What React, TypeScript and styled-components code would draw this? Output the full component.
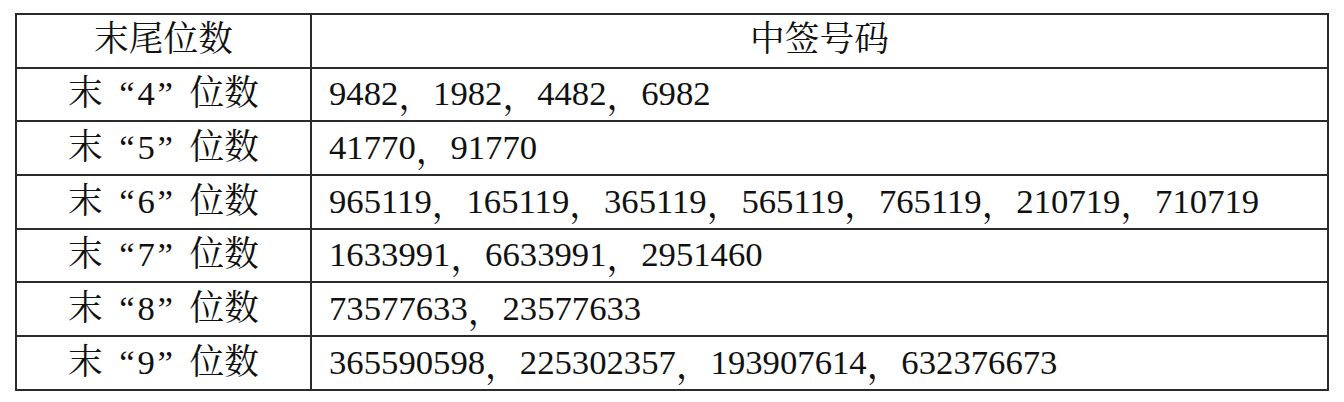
import React from "react";
import { createGlobalStyle, styled } from "styled-components";

const rows = [
  { digit: "4", codes: ["9482", "1982", "4482", "6982"] },
  { digit: "5", codes: ["41770", "91770"] },
  {
    digit: "6",
    codes: ["965119", "165119", "365119", "565119", "765119", "210719", "710719"],
  },
  { digit: "7", codes: ["1633991", "6633991", "2951460"] },
  { digit: "8", codes: ["73577633", "23577633"] },
  { digit: "9", codes: ["365590598", "225302357", "193907614", "632376673"] },
];

const GlobalStyle = createGlobalStyle`
  html, body {
    margin: 0;
    padding: 0;
    background: #ffffff;
  }
  body {
    color: #111111;
  }
`;

export default function App() {
  return (
    <>
      <GlobalStyle />
      <Page>
        <Table>
          <HeadCell>末尾位数</HeadCell>
          <HeadCell>中签号码</HeadCell>
          {rows.map((r) => (
            <React.Fragment key={r.digit}>
              <LabelCell>
                末<Quote $open>“</Quote>
                {r.digit}
                <Quote>”</Quote>位数
              </LabelCell>
              <CodeCell>
                {r.codes.map((c, i) => (
                  <React.Fragment key={c}>
                    {i > 0 && <Comma>，</Comma>}
                    <Num>{c}</Num>
                  </React.Fragment>
                ))}
              </CodeCell>
            </React.Fragment>
          ))}
        </Table>
      </Page>
    </>
  );
}

const Page = styled.div`
  padding: 13px 0 0 15px;
`;

const Table = styled.div`
  width: 1314px;
  box-sizing: border-box;
  display: grid;
  grid-template-columns: 293px 1fr;
  grid-auto-rows: 51.7px;
  gap: 2px;
  padding: 2px;
  background: #2b2b2b;
  font-family: "Liberation Serif", "Times New Roman", Tinos, "DejaVu Serif",
    "Noto Serif CJK SC", "Noto Sans CJK SC", serif;
  font-size: 34.7px;
`;

const Cell = styled.div`
  background: #ffffff;
  display: flex;
  align-items: center;
  white-space: nowrap;
  line-height: 1;
`;

const HeadCell = styled(Cell)`
  justify-content: center;
`;

const LabelCell = styled(Cell)`
  justify-content: center;
`;

const CodeCell = styled(Cell)`
  padding-left: 17px;
`;

const Num = styled.span`
  font-family: "Liberation Serif", "Times New Roman", serif;
`;

const Quote = styled.span<{ $open?: boolean }>`
  display: inline-block;
  width: 1em;
  text-align: ${(p) => (p.$open ? "right" : "left")};
  padding: ${(p) => (p.$open ? "0 0.08em 0 0" : "0 0 0 0.08em")};
  box-sizing: border-box;
  font-family: "Liberation Serif", "Times New Roman", serif;
`;

const Comma = styled.span`
  font-family: "Noto Serif CJK SC", "Noto Sans CJK SC", sans-serif;
  display: inline-block;
  width: 1em;
`;
